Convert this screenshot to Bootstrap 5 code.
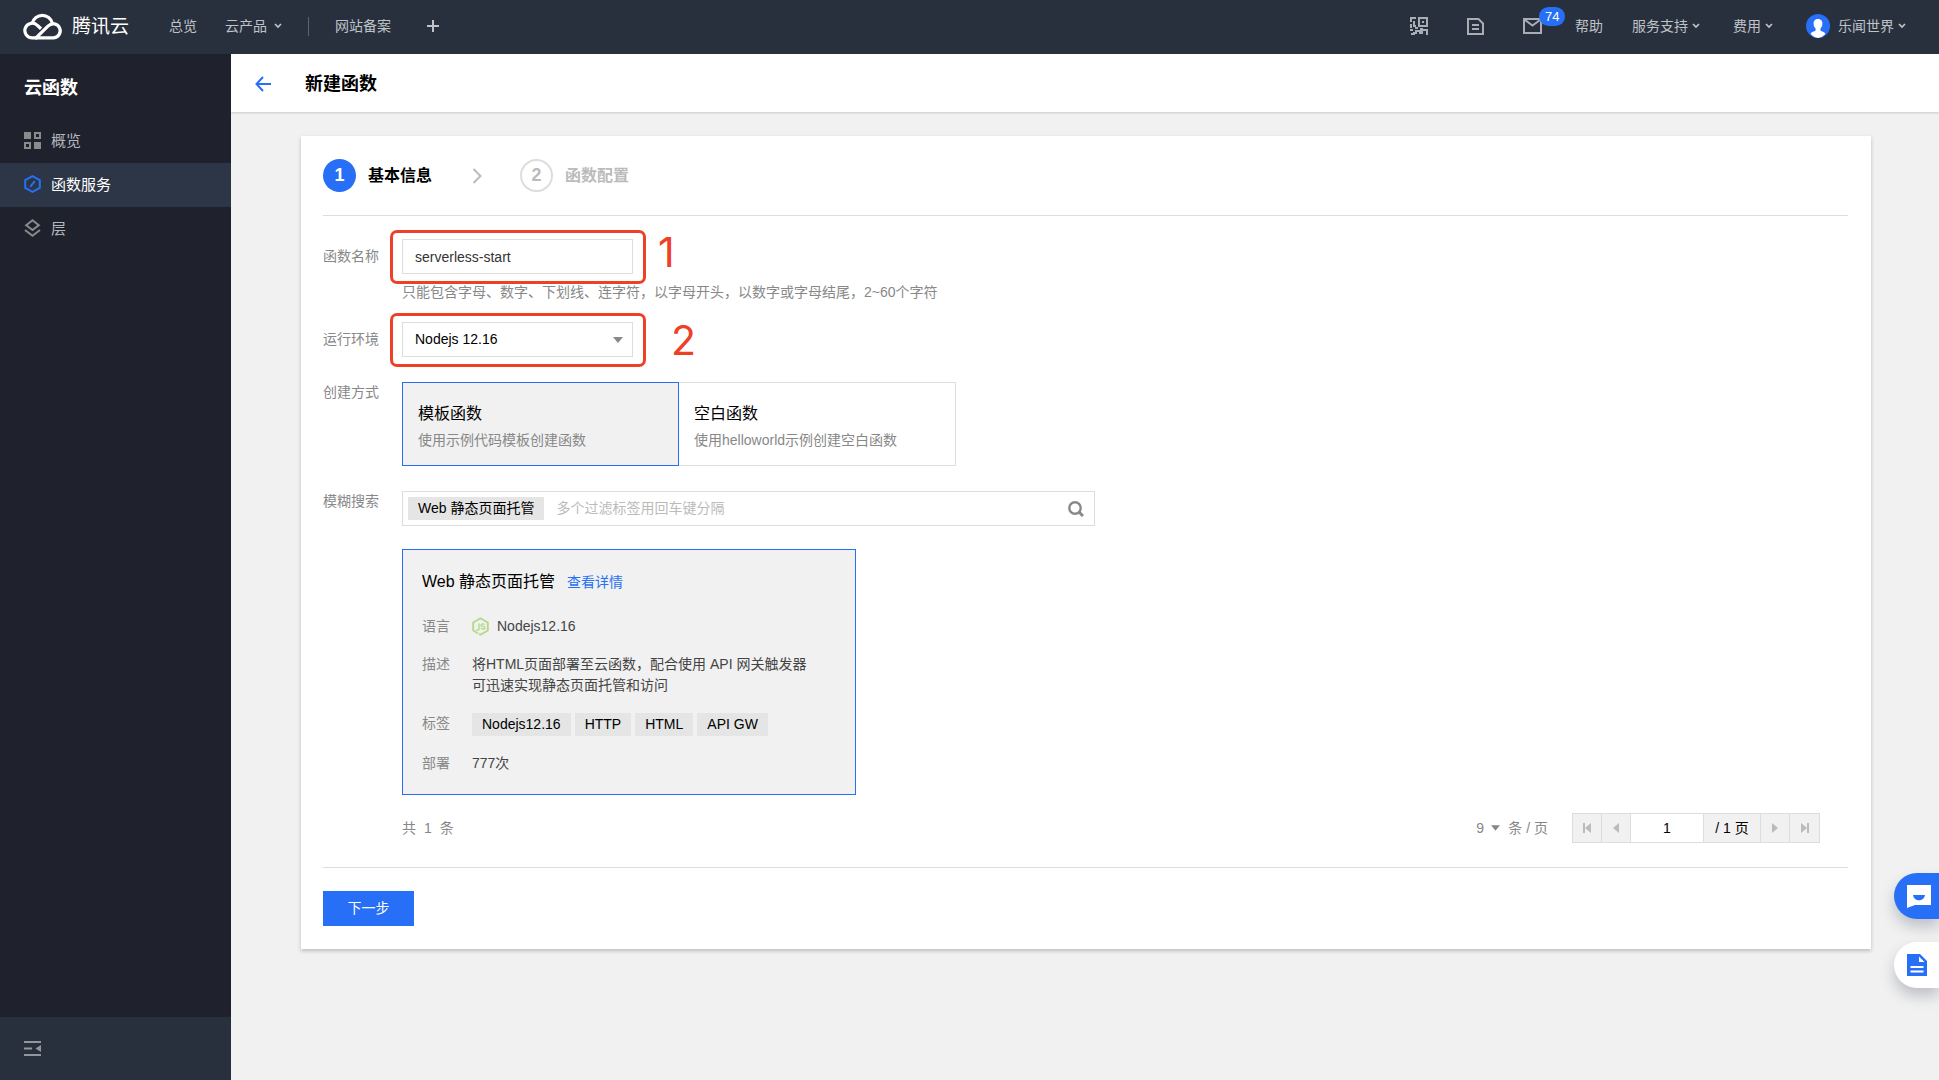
<!DOCTYPE html>
<html lang="zh-CN">
<head>
<meta charset="utf-8">
<meta name="viewport" content="width=device-width, initial-scale=1">
<title>新建函数 - 云函数</title>
<link rel="stylesheet" href="https://cdn.jsdelivr.net/npm/bootstrap@5.3.0/dist/css/bootstrap.min.css">
<style>
:root{--brand:#266ff6;--ink:#29303d;--hair:#ddd;--alert:#ee4026}
body{font-family:"Liberation Sans","Noto Sans CJK SC",sans-serif;font-size:14px;line-height:21px;color:#000;background:#f1f1f1}
svg{display:block;flex:none}
a{text-decoration:none}
.topbar{height:54px;background:var(--ink);padding:0 33px 2px 23px;flex:none;color:#bfc3c9}
.topbar a{color:#bfc3c9}
.topbar-main{gap:28px;margin-left:40px}
.topbar-main .vline{width:1px;height:19px;background:#5d646f;margin:0 -2px}
.brand-name{font-size:19px;color:#fff!important;gap:9px}
.topbar-side{gap:33px}
.topbar-side .icons{gap:39px}
.topbar-side .help{margin-right:-4px}
.msg-count{position:absolute;left:16px;top:-11px;background:var(--brand);font:13px/19px "Liberation Sans",sans-serif;color:#fff;padding:0 6px}
.caret-gap{gap:4px}
.topbar-main .caret-gap{gap:7px}
.side{width:231px;flex:none;background:#1f212c}
.side h2{font-size:18px;line-height:24px;font-weight:700;color:#fff;margin:22px 24px 19px}
.side .nav-link{height:44px;padding:0 24px 2px;gap:10px;font-size:15px;color:#b4b7bd}
.side .nav-link.active{background:#2c3646;color:#fff}
.side-foot{height:63px;background:var(--ink);padding:0 24px}
.page-head{height:58px;background:#fff;padding:2px 24px 0;gap:34px;box-shadow:0 1px 2px rgba(0,0,0,.16)}
.page-head h1{font-size:18px;line-height:24px;font-weight:700}
.panel{background:#fff;margin:24px 68px 24px 70px;padding:23px 23px 23px 22px;box-shadow:0 2px 4px rgba(0,0,0,.22)}
.steps{font-size:16px;font-weight:700;padding-bottom:23px;border-bottom:1px solid var(--hair)}
.step-no{width:33px;height:33px;border-radius:50%;background:var(--brand);color:#fff;font-size:18px}
.step-arrow{margin:0 38px 0 40px}
.step-off{color:#bbb}
.step-off .step-no{background:none;border:2px solid #ddd;color:#bbb}
.f-first{padding-top:23px;margin-bottom:20px}
.f-row{margin-bottom:25px}
.f-name{width:79px;flex:none;color:#888}
.f-name.mid{padding-top:7px}
.field{width:231px;height:35px;border-radius:0;border:1px solid var(--hair);font-size:14px;line-height:21px;padding:0 12px;color:#000;background:#fff;appearance:none}
.field-text{color:#333}
.hint{color:#888;line-height:20px;margin-top:8px}
.ring{position:absolute;inset:-9px -13px -10px -12px;border:3px solid var(--alert);border-radius:7px;pointer-events:none}
.ring-no{position:absolute;left:100%;top:50%;color:var(--alert);font:41px/40px Inter,"Liberation Sans",sans-serif;transform:translateY(-50%)}
.no-a{margin:-5px 0 0 25px}
.no-b{margin-left:38px}
.tri{position:absolute;right:10px;top:15px;pointer-events:none}
.mode{width:277px;height:84px;border:1px solid var(--hair);border-radius:0;text-align:left;padding:19px 15px;cursor:pointer}
.mode b{display:block;font-weight:400;font-size:16px;line-height:24px}
.mode span{display:block;color:#888;margin-top:4px}
.mode+.btn-check+.mode{border-left:0}
.btn-check:checked+.mode{border-color:var(--brand);background:#f1f1f1}
.finder{width:693px;max-width:100%;height:35px;border:1px solid var(--hair);padding:0 10px 0 5px}
.finder input{border:0;outline:0;background:none;margin-left:10px}
.finder input::placeholder{color:#bbb;opacity:1}
.tagbox{background:#e5e5e5;height:23px;line-height:23px;padding:0 10px;white-space:nowrap}
.plain-btn{border:0;background:none;padding:0}
.tpl{width:454px;max-width:100%;background:#f1f1f1;border:1px solid var(--brand);padding:20px 19px;margin:23px 0 18px}
.tpl h3{font-size:16px;line-height:24px;font-weight:400;margin:0}
.tpl-head{gap:12px;margin-bottom:22px}
.tpl-head a{color:var(--brand)}
.tpl dl{display:grid;grid-template-columns:50px 1fr;row-gap:17px;margin:0;color:#444}
.tpl dt{font-weight:400;color:#888}
.tpl dd{margin:0}
.tags{gap:4px;color:#000}
.foot-line{color:#888;margin-right:28px;height:30px}
.size-pick{border:0;background:none;appearance:none;color:#888;padding:0;width:24px}
.pager{border:1px solid var(--hair);background:#f1f1f1;height:30px;color:#000}
.pager>*{border:0;border-right:1px solid var(--hair);border-radius:0;height:28px}
.pager>:last-child{border-right:0}
.pager button{width:29px;background:none;padding:0}
.pager input{width:73px;text-align:center;background:#fff}
.pager span{width:57px;line-height:28px;text-align:center}
.panel-end{border-top:1px solid var(--hair);margin-top:24px;padding-top:23px}
.btn-next{width:91px;height:35px;border-radius:0;font-size:14px;background:var(--brand);border-color:var(--brand);padding:0}
.dock{position:fixed;right:0;top:873px;gap:23px}
.dock button{width:45px;height:46px;border:0;border-radius:24px 0 0 24px;padding:0 0 0 13px;background:#fff;box-shadow:0 8px 14px rgba(40,50,80,.25)}
.dock .chat{background:var(--brand)}
</style>
<script src="https://cdn.jsdelivr.net/npm/bootstrap@5.3.0/dist/js/bootstrap.bundle.min.js" defer></script>
</head>
<body class="d-flex flex-column min-vh-100">
<svg width="0" height="0" class="position-absolute" aria-hidden="true">
  <symbol id="chev" viewBox="0 0 8 6"><path d="M1 1l3 3 3-3" fill="none" stroke="#bfc3c9" stroke-width="1.7"/></symbol>
  <symbol id="tri" viewBox="0 0 10 6"><path d="M0 0h10L5 6z" fill="#888"/></symbol>
</svg>

<header class="topbar d-flex align-items-center justify-content-between">
  <nav class="d-flex align-items-center">
    <a href="#" class="brand-name d-flex align-items-center">
      <svg width="40" height="28" viewBox="0 0 40 28" fill="none" stroke="#fff" stroke-width="3.2"><path d="M14.5 25.8H9.200a7.300 7.300 0 1 1 5.300-12.300l3.500 3.200"/><path d="M9.300 11.200a10.300 10.300 0 0 1 20 0"/><path d="M13 25.800L25.200 13.900a7 7 0 1 1 4.900 11.900H12"/></svg>
      腾讯云
    </a>
    <div class="topbar-main d-flex align-items-center">
      <a href="#">总览</a>
      <a href="#" class="d-flex align-items-center caret-gap">云产品 <svg width="8" height="6"><use href="#chev"/></svg></a>
      <span class="vline"></span>
      <a href="#">网站备案</a>
      <button class="plain-btn ms-2" aria-label="添加"><svg width="12" height="12" viewBox="0 0 12 12"><path d="M6 0v12M0 6h12" stroke="#bfc3c9" stroke-width="2"/></svg></button>
    </div>
  </nav>
  <nav class="topbar-side d-flex align-items-center">
    <div class="icons d-flex align-items-center">
      <a href="#" aria-label="二维码"><svg width="18" height="18" viewBox="0 0 18 18" fill="none" stroke="#a9adb4" stroke-width="2"><path d="M6 1H1v4M1 7v4M4 4v5h2M9 1h8v8H9zM12 5h2M0 13h3M5 11h3M1 17h3v-2M6 17v-3h4v3M12 17v-4h5v5M10 12h3"/></svg></a>
      <a href="#" aria-label="文档"><svg width="17" height="17" viewBox="0 0 17 17" fill="none" stroke="#a9adb4" stroke-width="2"><path d="M1 1h10.500L16 5.500V16H1zM5 7h7M5 11h7"/></svg></a>
      <a href="#" class="position-relative" aria-label="消息"><svg width="19" height="16" viewBox="0 0 19 16" fill="none" stroke="#a9adb4" stroke-width="2"><path d="M1 1h17v14H1zM2 2l7.500 5.500L17 2"/></svg><span class="msg-count rounded-pill">74</span></a>
    </div>
    <a href="#" class="help">帮助</a>
    <a href="#" class="d-flex align-items-center caret-gap">服务支持 <svg width="8" height="6"><use href="#chev"/></svg></a>
    <a href="#" class="d-flex align-items-center caret-gap">费用 <svg width="8" height="6"><use href="#chev"/></svg></a>
    <a href="#" class="d-flex align-items-center caret-gap">
      <svg class="me-1" width="24" height="24" viewBox="0 0 24 24"><circle cx="12" cy="12" r="12" fill="#266ff6"/><path d="M12 5c3.200 0 4.600 2.200 4.400 5-.1 2-1 3.500-2 4.500v2c1.500 1 4 1.200 5 3.400A11.500 11.500 0 0 1 12 24a11.500 11.500 0 0 1-7.400-4.100c1-2.200 3.500-2.400 5-3.400v-2c-1-1-1.900-2.500-2-4.500C7.400 7.200 8.800 5 12 5z" fill="#fff"/></svg>
      乐闻世界 <svg width="8" height="6"><use href="#chev"/></svg>
    </a>
  </nav>
</header>

<div class="d-flex flex-grow-1">
  <aside class="side d-flex flex-column">
    <h2>云函数</h2>
    <ul class="nav flex-column flex-nowrap flex-grow-1">
      <li><a href="#" class="nav-link d-flex align-items-center"><svg width="17" height="17" viewBox="0 0 17 17"><path d="M0 0h7v7H0zM10 10h7v7h-7z" fill="#8b8b8b"/><path d="M11 1h5v5h-5zM1 11h5v5H1z" fill="none" stroke="#8b8b8b" stroke-width="2"/></svg>概览</a></li>
      <li><a href="#" class="nav-link active d-flex align-items-center"><svg width="17" height="18" viewBox="0 0 17 18" fill="none" stroke="#266ff6" stroke-width="2"><path d="M8.500 1.200l7.300 4v7.600l-7.300 4-7.300-4V5.200zM6.200 11.800l4.600-5.600"/></svg>函数服务</a></li>
      <li><a href="#" class="nav-link d-flex align-items-center"><svg width="17" height="18" viewBox="0 0 17 18" fill="none" stroke="#8b8b8b" stroke-width="2"><path d="M8.500 1.300l6.300 4.900-6.300 4.900-6.300-4.900zM1 11l7.500 5.700L16 11"/></svg>层</a></li>
    </ul>
    <div class="side-foot d-flex align-items-center">
      <button class="plain-btn" aria-label="收起菜单"><svg width="17" height="15" viewBox="0 0 17 15" fill="#92969d"><path d="M0 0h17v2H0zM0 6.500h8v2H0zM0 13h17v2H0zM17 4v7l-5.500-3.500z"/></svg></button>
    </div>
  </aside>

  <main class="flex-grow-1">
    <div class="page-head d-flex align-items-center">
      <a href="#" aria-label="返回"><svg width="16" height="16" viewBox="0 0 16 16" fill="none" stroke="#266ff6" stroke-width="2"><path d="M8 1L1.500 8 8 15M2 8h14"/></svg></a>
      <h1 class="m-0">新建函数</h1>
    </div>

    <form class="panel" onsubmit="return false">
      <div class="steps d-flex align-items-center">
        <span class="step-no d-flex align-items-center justify-content-center">1</span>
        <span class="ms-2 ps-1">基本信息</span>
        <svg class="step-arrow" width="10" height="16" viewBox="0 0 10 16"><path d="M1.500 1L8.500 8l-7 7" fill="none" stroke="#bbb" stroke-width="2"/></svg>
        <span class="step-off d-flex align-items-center gap-2"><span class="step-no d-flex align-items-center justify-content-center me-1">2</span>函数配置</span>
      </div>

      <div class="f-first d-flex">
        <label class="f-name mid" for="fn">函数名称</label>
        <div>
          <div class="position-relative d-inline-block align-top"><input id="fn" class="field field-text" value="serverless-start"><span class="ring"></span><span class="ring-no no-a">1</span></div>
          <div class="hint">只能包含字母、数字、下划线、连字符，以字母开头，以数字或字母结尾，2~60个字符</div>
        </div>
      </div>

      <div class="f-row d-flex">
        <label class="f-name mid" for="rt">运行环境</label>
        <div class="position-relative">
          <select id="rt" class="field d-block"><option>Nodejs 12.16</option></select>
          <svg class="tri" width="10" height="6"><use href="#tri"/></svg>
          <span class="ring"></span><span class="ring-no no-b">2</span>
        </div>
      </div>

      <div class="f-row d-flex">
        <span class="f-name">创建方式</span>
        <div class="d-flex">
          <input type="radio" class="btn-check" name="mode" id="m1" checked><label class="mode" for="m1"><b>模板函数</b><span>使用示例代码模板创建函数</span></label>
          <input type="radio" class="btn-check" name="mode" id="m2"><label class="mode" for="m2"><b>空白函数</b><span>使用helloworld示例创建空白函数</span></label>
        </div>
      </div>

      <div class="d-flex">
        <label class="f-name" for="q">模糊搜索</label>
        <div class="flex-grow-1">
          <div class="finder d-flex align-items-center">
            <span class="tagbox">Web 静态页面托管</span>
            <input id="q" class="flex-grow-1" placeholder="多个过滤标签用回车键分隔">
            <button class="plain-btn" aria-label="搜索"><svg width="16" height="16" viewBox="0 0 16 16" fill="none" stroke="#888"><circle cx="7" cy="7" r="5.700" stroke-width="2.400"/><path d="M11 11l4 4" stroke-width="3"/></svg></button>
          </div>

          <div class="tpl">
            <div class="tpl-head d-flex align-items-center"><h3>Web 静态页面托管</h3><a href="#">查看详情</a></div>
            <dl>
              <dt>语言</dt>
              <dd class="d-flex align-items-center gap-2"><svg width="17" height="19" viewBox="0 0 17 19" fill="none" stroke="#b3da83"><path d="M6 16.300L1.200 13.500v-8l7.300-4.200 7.300 4.200v8l-7.300 4.200-1.500-.8" stroke-width="1.900"/><path d="M7 6.500v5.200c0 1.400-1.300 1.700-2.700 1M12.700 7.500c-1.300-1-3.700-.8-3.700.7 0 1.700 3.900.7 3.900 2.500 0 1.600-2.600 1.700-4 .6" stroke-width="1.400"/></svg>Nodejs12.16</dd>
              <dt>描述</dt>
              <dd>将HTML页面部署至云函数，配合使用 API 网关触发器<br>可迅速实现静态页面托管和访问</dd>
              <dt>标签</dt>
              <dd class="tags d-flex"><span class="tagbox">Nodejs12.16</span><span class="tagbox">HTTP</span><span class="tagbox">HTML</span><span class="tagbox">API GW</span></dd>
              <dt>部署</dt>
              <dd>777次</dd>
            </dl>
          </div>

          <div class="foot-line d-flex align-items-center justify-content-between">
            <span class="d-flex gap-2"><span>共</span><span>1</span><span>条</span></span>
            <div class="d-flex align-items-center">
              <div class="position-relative me-2"><select class="size-pick" aria-label="每页条数"><option>9</option></select><svg class="tri end-0 top-50 translate-middle-y" width="9" height="6"><use href="#tri"/></svg></div>
              <span class="me-4">条 / 页</span>
              <div class="pager d-flex">
                <button class="d-flex align-items-center justify-content-center" aria-label="首页"><svg width="8" height="10" viewBox="0 0 8 10" fill="#bbb"><path d="M0 0h2v10H0zM8 0v10L2 5z"/></svg></button>
                <button class="d-flex align-items-center justify-content-center" aria-label="上一页"><svg width="6" height="10" viewBox="0 0 6 10" fill="#bbb"><path d="M6 0v10L0 5z"/></svg></button>
                <input value="1" aria-label="页码">
                <span>/ 1 页</span>
                <button class="d-flex align-items-center justify-content-center" aria-label="下一页"><svg width="6" height="10" viewBox="0 0 6 10" fill="#bbb"><path d="M0 0v10l6-5z"/></svg></button>
                <button class="d-flex align-items-center justify-content-center" aria-label="末页"><svg width="8" height="10" viewBox="0 0 8 10" fill="#bbb"><path d="M6 0h2v10H6zM0 0v10l6-5z"/></svg></button>
              </div>
            </div>
          </div>
        </div>
      </div>

      <div class="panel-end"><button class="btn btn-primary btn-next d-block">下一步</button></div>
    </form>
  </main>
</div>

<div class="dock d-flex flex-column">
  <button class="chat" aria-label="在线咨询"><svg width="24" height="23" viewBox="0 0 24 23"><path d="M0 0h24v20H8l-8 3z" fill="#fff"/><path d="M6 10h12c-1 7-11 7-12 0z" fill="#266ff6"/></svg></button>
  <button aria-label="帮助文档"><svg width="20" height="22" viewBox="0 0 20 22"><path d="M0 0h13l7 7v15H0z" fill="#266ff6"/><path d="M12 2.500v5.500h5.500zM3.500 12h13v2h-13zM3.500 16.500h13v2h-13z" fill="#fff"/></svg></button>
</div>
</body>
</html>
